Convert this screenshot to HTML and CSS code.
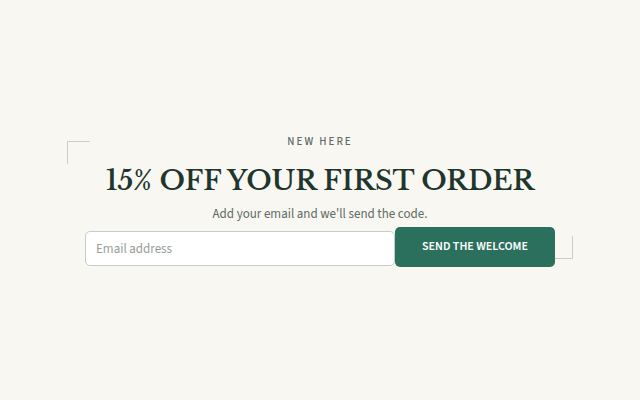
FILE: index.html
```
<!DOCTYPE html>
<html lang="en">
<head>
    <meta charset="UTF-8">
    <meta name="viewport" content="width=device-width, initial-scale=1.0">
    <title>15% off your first order</title>
    <link rel="stylesheet" href="styles.css">
</head>
<body>
    <main class="signup">
        <p class="eyebrow">NEW HERE</p>
        <h1 class="title">15% OFF YOUR FIRST ORDER</h1>
        <p class="lead">Add your email and we'll send the code.</p>
        <form class="signup-form">
            <label class="email-field" for="email" aria-label="Email address">
                <input type="email" class="email-input" id="email" placeholder="Email address">
            </label>
            <button type="submit" class="btn">SEND THE WELCOME</button>
        </form>
    </main>
</body>
</html>
```

FILE: styles.css
```
* {
    margin: 0;
    padding: 0;
    box-sizing: border-box;
}
body {
    min-height: 100vh;
    display: flex;
    justify-content: center;
    align-items: center;
    padding: 0 24px;
    background: #f8f7f2;
    color: #5f6b64;
    font-family: "Source Sans 3", "Noto Sans CJK SC", sans-serif;
}
.signup {
    position: relative;
    width: 100%;
    max-width: 470px;
    text-align: center;
}
/* corner brackets */
.signup::before,
.signup::after {
    content: "";
    position: absolute;
    width: 22px;
    height: 22px;
    border: 0 solid #c9cfc8;
    z-index: -1;
}
.signup::before {
    top: 8px;
    left: -18px;
    border-width: 1px 0 0 1px;
}
.signup::after {
    right: -18px;
    bottom: 8px;
    border-width: 0 1px 1px 0;
}
.eyebrow {
    font-size: 11px;
    font-weight: 500;
    line-height: 18px;
    letter-spacing: 2px;
}
.title {
    margin-top: 10px;
    color: #20352b;
    font-family: "Libre Baskerville", "Liberation Serif", serif;
    font-size: 27px;
    font-weight: 600;
    line-height: 40px;
}
.lead {
    margin-top: 4px;
    font-size: 13px;
    line-height: 18px;
}
.signup-form {
    display: flex;
    align-items: flex-end;
    margin-top: 4px;
}
.email-field {
    display: flex;
    flex: 1;
    min-width: 0;
    padding-bottom: 1px;
}
.email-input {
    width: 100%;
    height: 35px;
    padding: 0 10px;
    border: 1px solid #c3cec8;
    border-radius: 5px;
    background: #fff;
    color: #20352b;
    font-family: inherit;
    font-size: 13px;
}
.email-input::placeholder {
    color: #969e9a;
}
.btn {
    width: 160px;
    height: 40px;
    padding-bottom: 2px;
    border: none;
    border-radius: 5px;
    background: #2a705d;
    color: #fff;
    font-family: inherit;
    font-size: 12px;
    font-weight: 600;
    cursor: pointer;
}
```
